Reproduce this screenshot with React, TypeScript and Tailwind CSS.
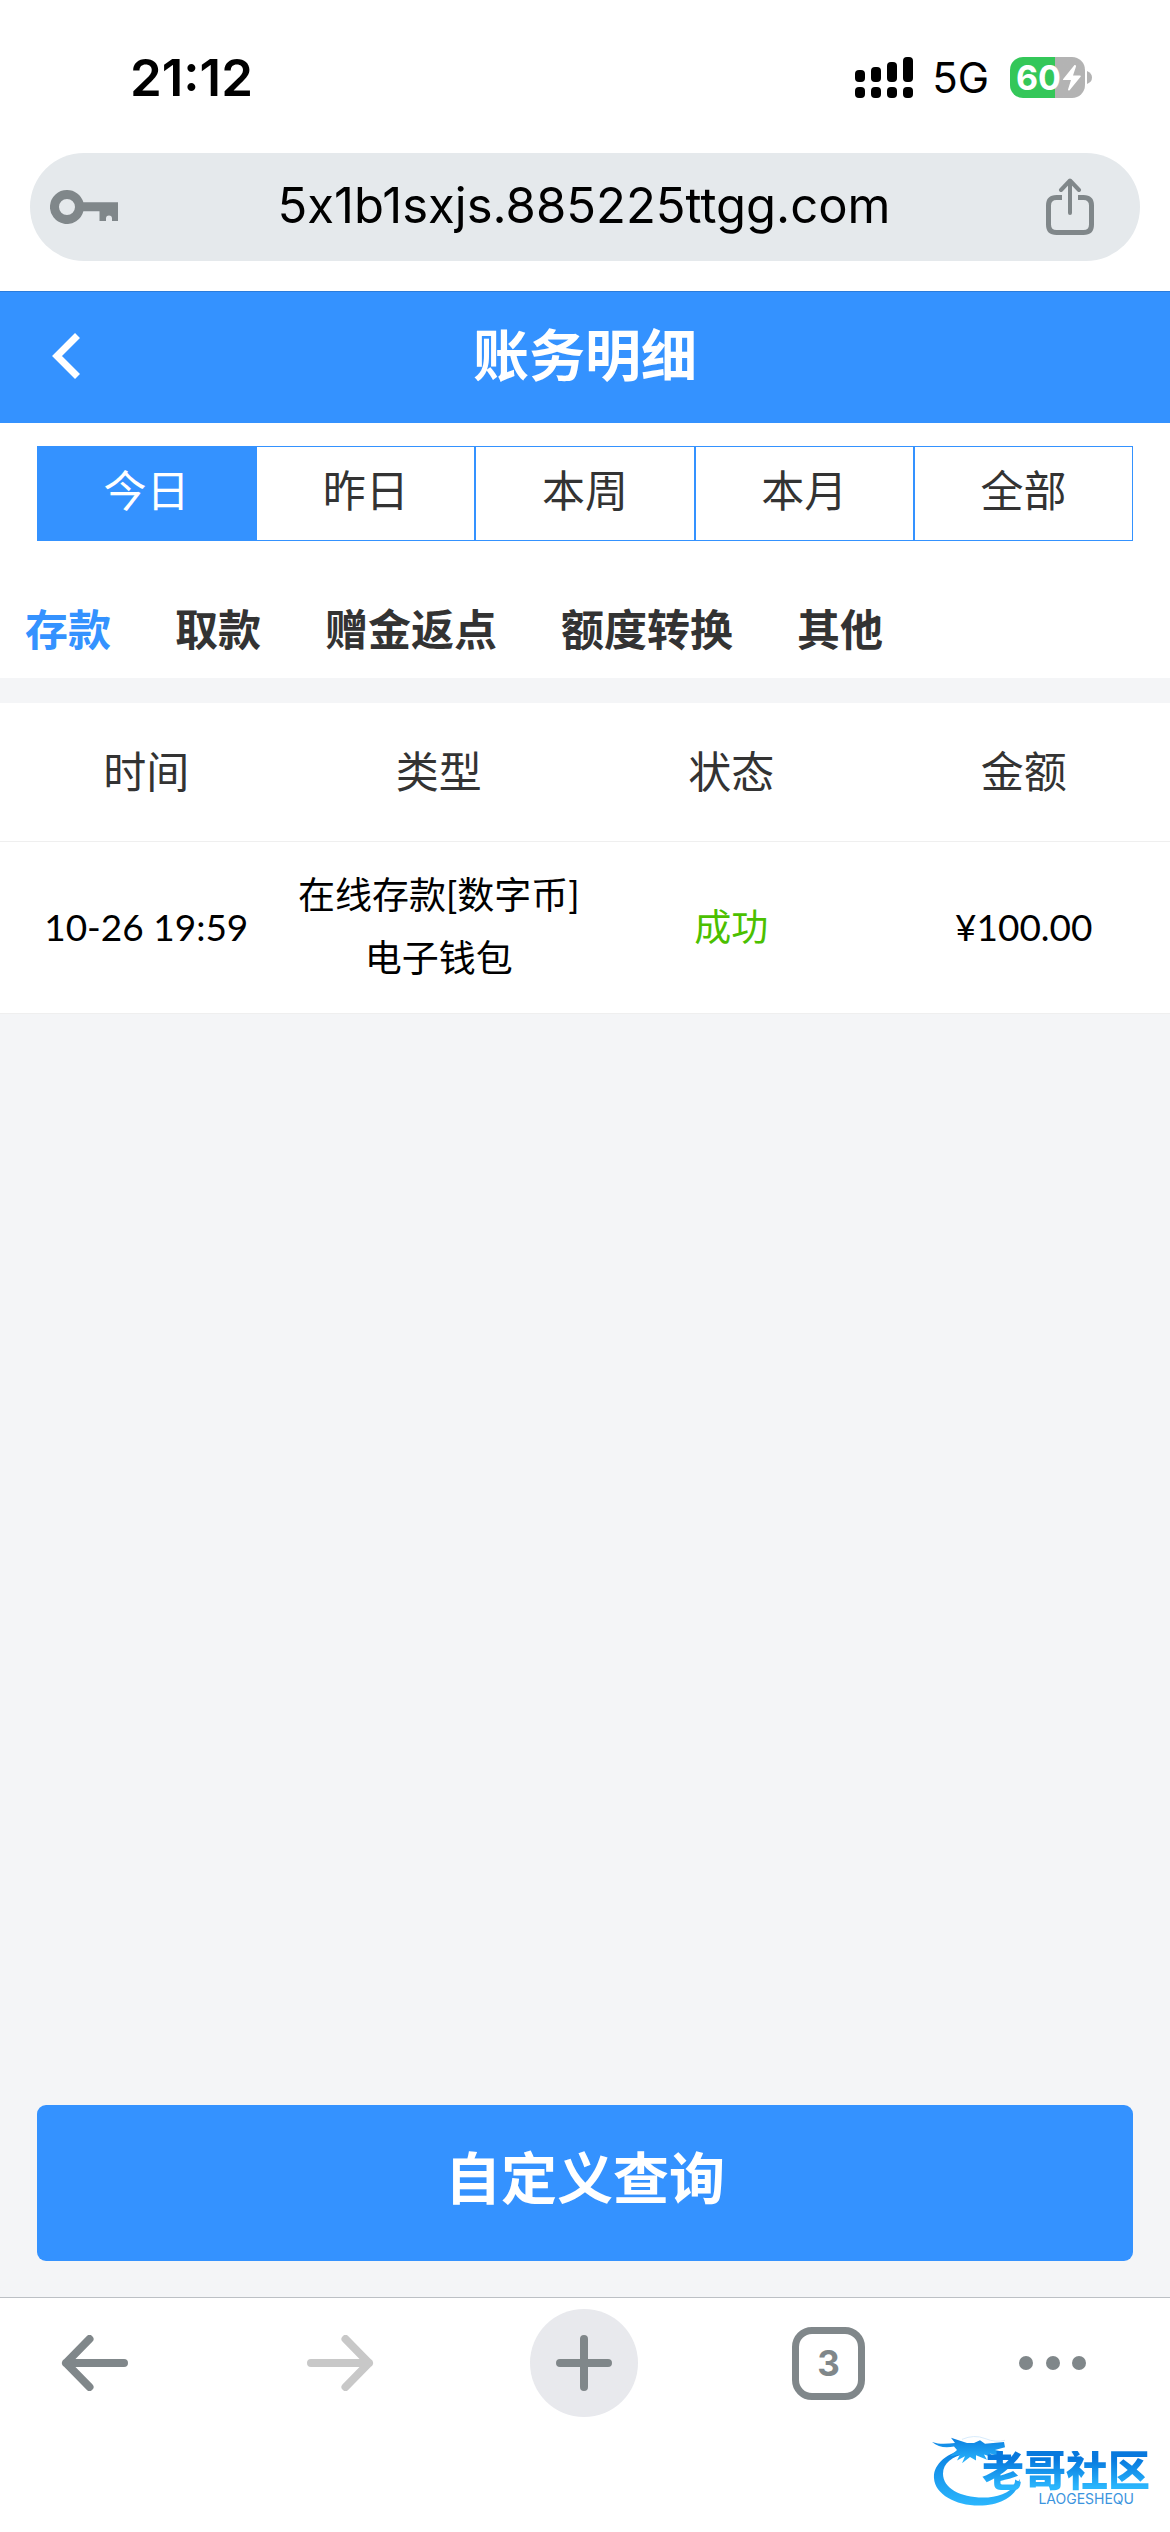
import { useState } from "react";

const ranges = ["今日", "昨日", "本周", "本月", "全部"];
const categories = ["存款", "取款", "赠金返点", "额度转换", "其他"];
const columns = ["时间", "类型", "状态", "金额"];
const records = [
  { time: "10-26 19:59", type: ["在线存款[数字币]", "电子钱包"], status: "成功", amount: "¥100.00" },
];

function SignalIcon() {
  const tops = [13, 10, 5, 0];
  return (
    <svg width="58" height="41" viewBox="0 0 58 41" aria-hidden="true">
      {tops.map((top, i) => (
        <g key={top}>
          <rect x={i * 16} y={top} width="10" height={25 - top} rx="4" />
          <rect x={i * 16} y="30" width="10" height="11" rx="4" />
        </g>
      ))}
    </svg>
  );
}

function Battery() {
  return (
    <div className="flex items-center gap-0.5">
      <div className="flex h-[41px] w-[75px] items-center rounded-[13px] bg-linear-to-r from-[#34c759] from-60% to-[#b3b3b3] to-60% pl-[6px] text-white">
        <span className="text-[34px] leading-none font-bold">60</span>
        <svg width="18" height="26" viewBox="0 0 18 26" fill="currentColor" className="ml-0.5" aria-hidden="true">
          <path d="M11.5 0 0 14.2Q-.3 15 .8 15H8L5 24.5Q5 26 6.6 25.3L17.8 11.5Q18 10.6 17 10.4H10L13 1.4Q13.1-.3 11.5 0Z" />
        </svg>
      </div>
      <svg width="5" height="13" viewBox="0 0 5 13" fill="#b3b3b3" aria-hidden="true">
        <path d="M0 0Q5 2 5 6.5T0 13Z" />
      </svg>
    </div>
  );
}

function StatusBar() {
  return (
    <div className="flex h-[153px] items-start justify-between pt-[57px] pr-[78px] pl-[130px] text-black">
      <span className="text-[51px] leading-[42px] font-semibold">21:12</span>
      <div className="flex h-[41px] items-center">
        <SignalIcon />
        <span className="ml-[19px] mr-[21px] text-[42px] leading-none">5G</span>
        <Battery />
      </div>
    </div>
  );
}

function AddressBar() {
  return (
    <div className="mx-[30px] mb-[30px] flex h-[108px] items-center justify-between rounded-full bg-[#e5e9ec] pr-[46px] pl-5 text-[#80878a]">
      <button aria-label="密码" className="w-[72px]">
        <svg width="68" height="34" viewBox="0 0 68 34" fill="currentColor">
          <path
            fillRule="evenodd"
            d="M17 0a17 17 0 0 1 16.4 12.3H68V31h-6v-2.500a3 3 0 0 0-6 0V31h-6.500V21.300H33.400A17 17 0 1 1 17 0Zm0 9a8 8 0 1 0 0 16a8 8 0 0 0 0-16Z"
          />
        </svg>
      </button>
      <input
        aria-label="网址"
        readOnly
        value="5x1b1sxjs.885225ttgg.com"
        className="min-w-0 flex-1 bg-transparent pb-0.5 text-center text-[49px] text-black outline-none [font-feature-settings:'calt'_0]"
      />
      <button aria-label="分享">
        <svg width="48" height="58" viewBox="0 0 48 58" fill="none" stroke="currentColor" strokeWidth="5" strokeLinecap="round" strokeLinejoin="round">
          <path d="M16 19.500H10.500Q2.500 19.500 2.500 27.500V46.500Q2.500 54.500 10.500 54.500H37.500Q45.500 54.500 45.500 46.500V27.500Q45.500 19.500 37.500 19.500H32" strokeLinecap="butt" />
          <path d="M24 35V3.500M15 12 24 2.500 33 12" strokeWidth="4" />
        </svg>
      </button>
    </div>
  );
}

function ArrowIcon({ flipped = false }: { flipped?: boolean }) {
  return (
    <svg
      width="68"
      height="56"
      viewBox="0 0 68 56"
      fill="none"
      stroke="currentColor"
      strokeWidth="8"
      strokeLinecap="round"
      strokeLinejoin="round"
      className={flipped ? "-scale-x-100" : ""}
      aria-hidden="true"
    >
      <path d="M63 28H5M28.500 4 5 28 28.500 52" />
    </svg>
  );
}

function Watermark() {
  return (
    <div className="absolute right-4 bottom-[20px] h-[84px] w-[222px]">
      <svg width="222" height="74" viewBox="0 0 222 84" preserveAspectRatio="none" aria-hidden="true" className="absolute inset-x-0 top-[7px]">
        <defs>
          <linearGradient id="dragon" x1="0" y1="0" x2="0" y2="1">
            <stop offset="0" stopColor="#0a7fe0" />
            <stop offset="1" stopColor="#2bb6fd" />
          </linearGradient>
        </defs>
        <g fill="url(#dragon)">
          <path d="M36 15C14 20 1 34 2 49C3 67 23 80 47 80C70 80 86 68 88 50C79 66 66 71 51 71C28 71 11 60 11 44C11 32 20 24 35 21Z" />
          <path d="M0 8C8 11 15 10 23 9L19 3 35 9 42 9 48 6 53 10 72 8 73 14 63 17 71 19 70 25 58 21 63 26 52 22 55 28 44 23 44 29 38 25 30 32 33 24 25 29 28 22 18 24 25 17 22 13C14 15 6 14 0 8Z" />
        </g>
        <path d="M30 5Q42-1 53 4T73 6" fill="none" stroke="#d5eafb" strokeWidth="1" />
      </svg>
      <div className="relative flex flex-col items-end pt-[23px]">
        <span className="bg-linear-to-b from-[#0878dd] from-20% to-[#2bb6fd] to-90% bg-clip-text pr-1 text-[42px] leading-[40px] font-black text-transparent">
          老哥社区
        </span>
        <span className="pr-5 text-[14px] leading-4 text-[#3b94de]">LAOGESHEQU</span>
      </div>
    </div>
  );
}

function BrowserToolbar() {
  return (
    <nav className="relative h-[235px] border-t border-[#bcc0c5] bg-white text-[#80878a]">
      <div className="flex items-center justify-between pt-[11px] pr-[84px] pl-[41px]">
        <button aria-label="后退" className="grid size-[108px] place-items-center">
          <ArrowIcon />
        </button>
        <button aria-label="前进" disabled className="grid size-[108px] place-items-center text-[#c8c8c8]">
          <ArrowIcon flipped />
        </button>
        <button aria-label="新标签页" className="grid size-[108px] place-items-center rounded-full bg-[#e8e9ed]">
          <svg width="56" height="56" viewBox="0 0 56 56" stroke="currentColor" strokeWidth="8" strokeLinecap="round">
            <path d="M28 4V52M4 28H52" />
          </svg>
        </button>
        <button aria-label="3 个标签页" className="grid size-[108px] place-items-center">
          <span className="grid size-[73px] place-items-center rounded-[20px] border-[7px] border-current text-[35px] leading-none font-bold">
            3
          </span>
        </button>
        <button aria-label="更多" className="flex h-[108px] w-[67px] items-center justify-between">
          <span className="size-[14px] rounded-full bg-current" />
          <span className="size-[14px] rounded-full bg-current" />
          <span className="size-[14px] rounded-full bg-current" />
        </button>
      </div>
      <Watermark />
    </nav>
  );
}

export default function App() {
  const [range, setRange] = useState("今日");
  const [category, setCategory] = useState("存款");

  return (
    <div className="flex min-h-screen flex-col bg-white font-['Inter','Noto_Sans_CJK_SC',sans-serif]">
      <StatusBar />
      <AddressBar />

      <header className="grid h-[132px] grid-cols-[1fr_auto_1fr] items-center border-t border-[#2b7cdb] bg-[#3492ff] pb-1 text-white">
        <button aria-label="返回" className="ml-[52px] w-fit">
          <svg width="30" height="46" viewBox="0 0 30 46" fill="none" stroke="currentColor" strokeWidth="7">
            <path d="M25.500 2.500 5 23 25.500 43.500" />
          </svg>
        </button>
        <h1 className="text-[56px] leading-[72px] font-bold">账务明细</h1>
      </header>

      <div className="grid grid-cols-5 px-[37px] pt-[23px]">
        {ranges.map((label) => (
          <button
            key={label}
            aria-pressed={label === range}
            onClick={() => setRange(label)}
            className="h-[95px] border border-[#3492ff] pb-1 text-[43px] text-[#333333] aria-pressed:bg-[#3492ff] aria-pressed:text-white"
          >
            {label}
          </button>
        ))}
      </div>

      <div role="tablist" className="flex h-[137px] items-center gap-16 px-[25px] pt-10">
        {categories.map((label) => (
          <button
            key={label}
            role="tab"
            aria-selected={label === category}
            onClick={() => setCategory(label)}
            className="text-[43px] leading-[60px] font-bold whitespace-nowrap text-[#333333] aria-selected:text-[#3492ff]"
          >
            {label}
          </button>
        ))}
      </div>

      <main className="flex flex-1 flex-col justify-between bg-[#f4f5f7] pt-[25px]">
        <table className="w-full table-fixed border-collapse bg-white text-center font-['Lato','Noto_Sans_CJK_SC',sans-serif]">
          <thead>
            <tr className="h-[138px] border-b border-[#efefef] text-[43px] text-[#333333]">
              {columns.map((name) => (
                <th key={name} scope="col" className="font-normal">
                  {name}
                </th>
              ))}
            </tr>
          </thead>
          <tbody>
            {records.map((record) => (
              <tr key={record.time} className="h-[172px] border-b border-[#efefef] text-[37px] leading-[63px] text-black">
                <td className="pb-0.5">{record.time}</td>
                <td className="pb-0.5">
                  {record.type.map((line) => (
                    <div key={line} className="whitespace-nowrap">{line}</div>
                  ))}
                </td>
                <td className="pb-0.5 text-[#4bc000]">{record.status}</td>
                <td className="pb-0.5">{record.amount}</td>
              </tr>
            ))}
          </tbody>
        </table>

        <button className="mx-[37px] mb-9 h-[156px] rounded-[9px] bg-[#3492ff] pb-2 text-[56px] font-bold text-white">
          自定义查询
        </button>
      </main>

      <BrowserToolbar />
    </div>
  );
}
